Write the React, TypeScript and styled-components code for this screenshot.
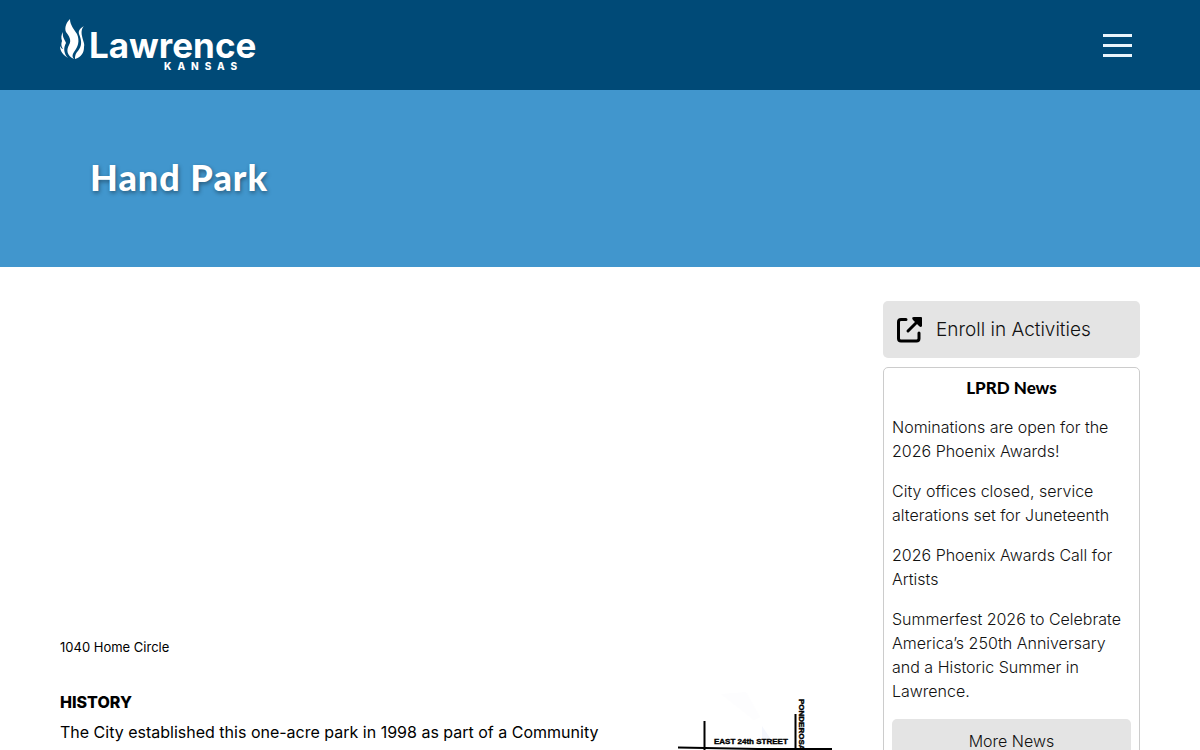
import React from "react";
import styled, { createGlobalStyle } from "styled-components";

const GlobalStyle = createGlobalStyle`
  * { box-sizing: border-box; }
  body {
    margin: 0;
    background: #fff;
    color: #000;
    font-family: Inter, "Liberation Sans", sans-serif;
    font-size: 16px;
    line-height: 24px;
  }
`;

const Header = styled.header`
  display: flex;
  align-items: center;
  justify-content: space-between;
  height: 90px;
  padding: 0 60px;
  background: #004a77;
`;

const LogoLink = styled.a`
  display: flex;
  color: #fff;
`;

const MenuButton = styled.button`
  display: flex;
  flex-direction: column;
  gap: 7px;
  padding: 8px;
  border: 0;
  background: none;
  cursor: pointer;
`;

const MenuBar = styled.span`
  width: 29px;
  height: 3px;
  background: #e9f5fc;
`;

const Hero = styled.section`
  display: flex;
  align-items: center;
  height: 177px;
  padding: 0 90px 4px;
  background: #4196cd;
`;

const HeroTitle = styled.h1`
  margin: 0;
  color: #fff;
  font-family: Lato, sans-serif;
  font-size: 36px;
  font-weight: 900;
  line-height: 42px;
  letter-spacing: 1px;
  text-shadow: 1px 2px 4px rgba(0, 0, 0, 0.4);
`;

const Content = styled.div`
  display: grid;
  grid-template-columns: minmax(0, 1fr) 257px;
  gap: 51px;
  padding: 34px 60px 0;
`;

const MapSpace = styled.div`
  height: 334px;
`;

const Address = styled.p`
  margin: 0 0 31px;
  font-size: 13px;
`;

const Article = styled.div`
  display: grid;
  grid-template-columns: minmax(0, 1fr) 154px;
  gap: 54px;
`;

const SectionTitle = styled.h2`
  margin: 0 0 6px;
  font-size: 16px;
  font-weight: 800;
  line-height: 24px;
`;

const Paragraph = styled.p`
  margin: 0;
`;

const Sidebar = styled.aside`
  display: flex;
  flex-direction: column;
  gap: 9px;
  font-weight: 300;
`;

const EnrollLink = styled.a`
  display: flex;
  align-items: center;
  gap: 12px;
  height: 57px;
  padding: 0 13px;
  border-radius: 5px;
  background: #e4e4e4;
  color: #111;
  font-size: 19px;
  text-decoration: none;
`;

const NewsCard = styled.section`
  display: flex;
  flex-direction: column;
  gap: 16px;
  padding: 8px 8px 16px;
  border: 1px solid #ccc;
  border-radius: 5px;
`;

const NewsTitle = styled.h2`
  margin: 0;
  font-family: Lato, sans-serif;
  font-size: 17px;
  font-weight: 900;
  line-height: 23px;
  text-align: center;
`;

const NewsLink = styled.a`
  color: #111;
  text-decoration: none;
`;

const MoreLink = styled.a`
  padding: 10px;
  border-radius: 5px;
  background: #e4e4e4;
  color: #111;
  text-align: center;
  text-decoration: none;
`;

const news = [
  "Nominations are open for the 2026 Phoenix Awards!",
  "City offices closed, service alterations set for Juneteenth",
  "2026 Phoenix Awards Call for Artists",
  "Summerfest 2026 to Celebrate America’s 250th Anniversary and a Historic Summer in Lawrence.",
];

function Logo() {
  return (
    <svg width="200" height="54" viewBox="0 0 200 54" fill="currentColor" aria-label="Lawrence Kansas">
      <path d="M10 1C10 7 14 11 17 16C20 23 18 29 14 34C12 37 12 39 14 41C7 38 6 32 9 27C12 22 9 18 6 14C4 9 7 4 10 1Z" />
      <path d="M3 14C2 19 5 22 6 25C3 30 4 36 8 40C3 37 0 33 0 28C1 30 2 31 3 31C1 28 1 26 2 23C1 20 1 17 3 14Z" />
      <path d="M24 8C21 10 18 12 19 16C22 23 22 28 18 33C15 36 15 39 15 41C21 39 24 35 24 29C25 26 23 23 22 18C21 13 22 10 24 8Z" />
      <text x="29" y="40" fontFamily="Inter, sans-serif" fontSize="35" fontWeight="700">Lawrence</text>
      <text x="104" y="52" fontFamily="Inter, sans-serif" fontSize="10" fontWeight="800" letterSpacing="6">KANSAS</text>
    </svg>
  );
}

function ExternalIcon() {
  return (
    <svg width="28" height="28" viewBox="0 0 28 28" fill="none" stroke="#000" strokeWidth="3" aria-hidden="true">
      <path d="M10 3.500H5Q2.500 3.500 2.500 6V22.500Q2.500 25 5 25H20.500Q23 25 23 22.500V17" strokeLinecap="round" strokeLinejoin="round" />
      <path d="M12 15L22 5" strokeLinecap="round" />
      <path d="M18 1H25Q26 1 26 2V10Q25 12 23 10L17 4Q15 1 18 1Z" fill="#000" stroke="none" />
    </svg>
  );
}

function StreetMap() {
  return (
    <svg width="154" height="70" viewBox="0 0 154 70" role="img" aria-label="Park location map">
      <path d="M43 4L68 2L82 27L76 30Z" fill="#fdfdfe" />
      <path d="M84 36L94 51H84Z" fill="#f5f7fd" />
      <g stroke="#000" fill="none">
        <path d="M26.500 31V70M117.500 24V70" strokeWidth="2" />
        <path d="M0 57.500L80 59H154" strokeWidth="2" />
      </g>
      <g fontFamily="Liberation Sans, sans-serif" fontWeight="700" fontSize="8" stroke="#000" strokeWidth="0.400">
        <text x="36" y="54">EAST 24th STREET</text>
        <text transform="translate(121 9) rotate(90)">PONDEROSA</text>
      </g>
    </svg>
  );
}

export default function App() {
  return (
    <>
      <GlobalStyle />
      <Header>
        <LogoLink href="#" aria-label="Lawrence Kansas home"><Logo /></LogoLink>
        <MenuButton type="button" aria-label="Menu">
          <MenuBar /><MenuBar /><MenuBar />
        </MenuButton>
      </Header>
      <Hero><HeroTitle>Hand Park</HeroTitle></Hero>
      <Content>
        <main>
          <MapSpace />
          <Address>1040 Home Circle</Address>
          <Article>
            <div>
              <SectionTitle>HISTORY</SectionTitle>
              <Paragraph>The City established this one-acre park in 1998 as part of a Community</Paragraph>
            </div>
            <StreetMap />
          </Article>
        </main>
        <Sidebar>
          <EnrollLink href="#"><ExternalIcon />Enroll in Activities</EnrollLink>
          <NewsCard>
            <NewsTitle>LPRD News</NewsTitle>
            {news.map((item) => <NewsLink href="#" key={item}>{item}</NewsLink>)}
            <MoreLink href="#">More News</MoreLink>
          </NewsCard>
        </Sidebar>
      </Content>
    </>
  );
}
